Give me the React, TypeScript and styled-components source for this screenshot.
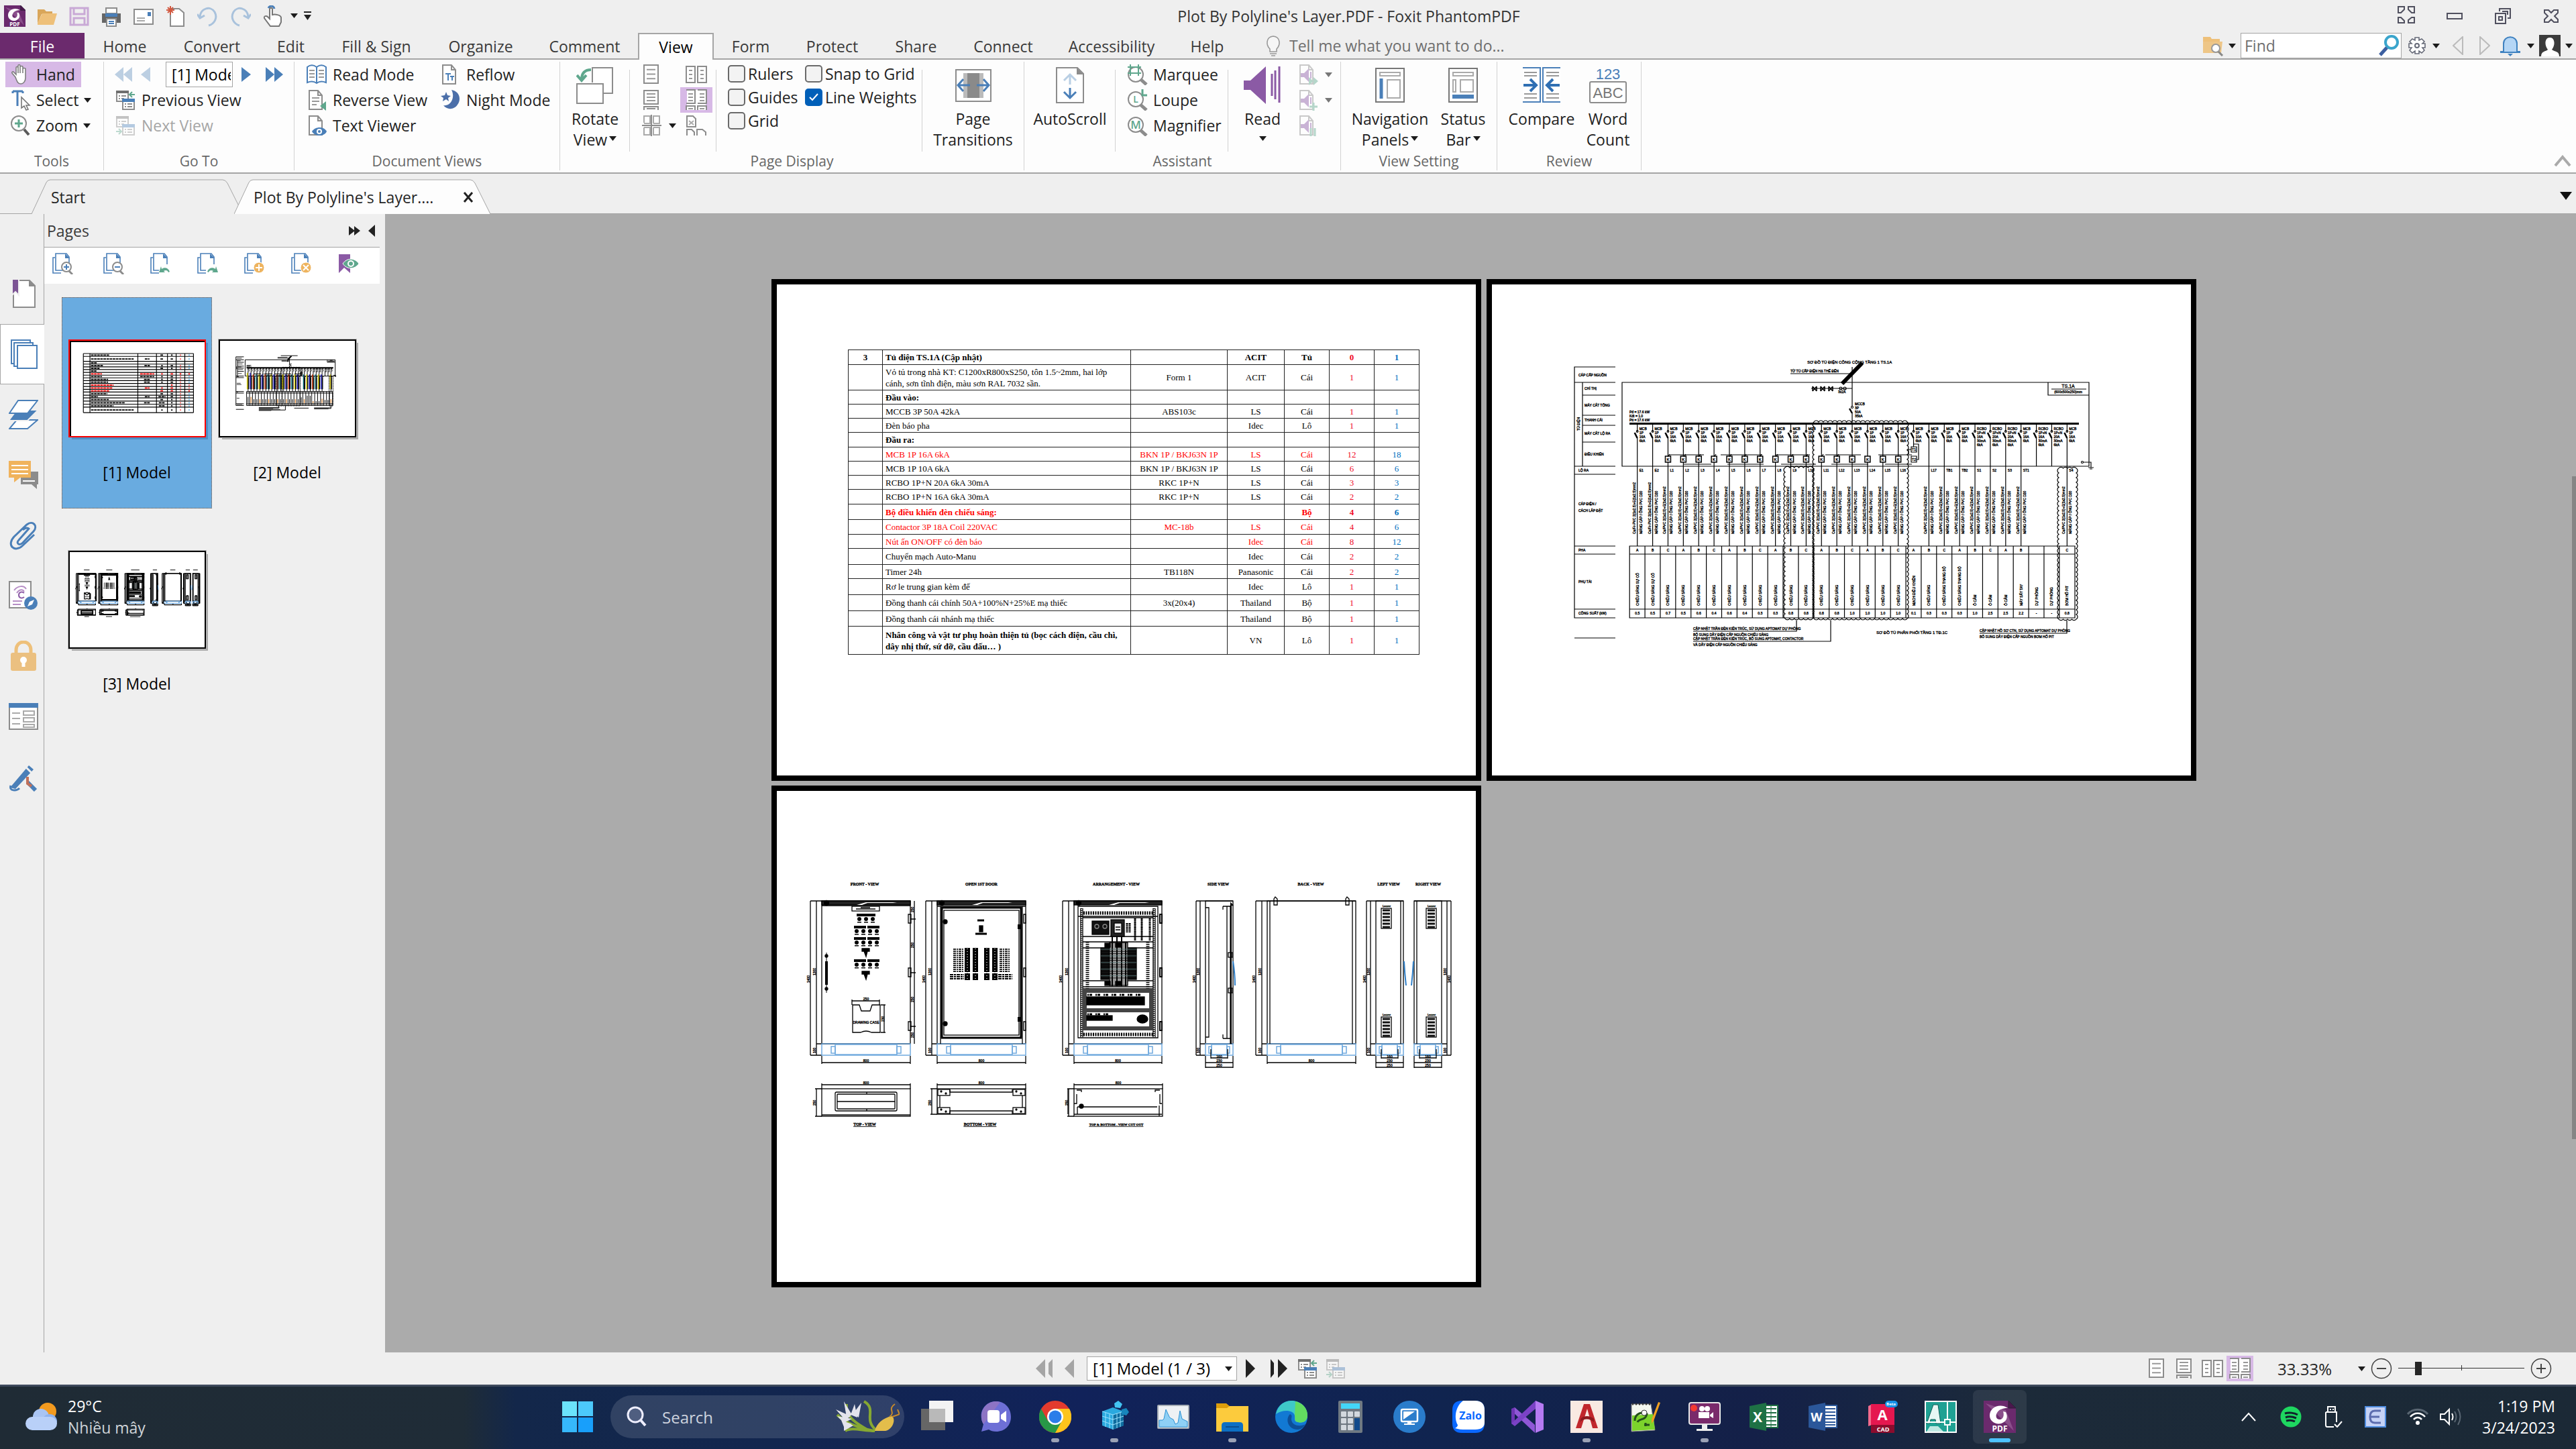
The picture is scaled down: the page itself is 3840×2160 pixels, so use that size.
import React from "react";
import styled, { createGlobalStyle, css } from "styled-components";

const Global = createGlobalStyle`
  *, *::before, *::after { box-sizing: border-box; }
  body { margin: 0; background: #efefef; }
  body, button, input, select { font-family: "Open Sans", "Noto Sans", sans-serif; font-size: 23px; }
  button { border: 0; padding: 0; background: transparent; color: inherit; }
  svg { display: block; flex: none; }
`;

const C = {
  blue: "#4a7fb8", green: "#5fa78d", gray: "#8c8c8c", dark: "#5a5a5a", purple: "#8b5aa5",
  orange: "#eec07a", line: "#a5a5a5", lilac: "#d7b9e6", fox: "#6b2a6d",
};

/* ---------- icons ---------- */
type IconProps = { w?: number; h?: number; box?: string; children: React.ReactNode };
const Ic = ({ w = 32, h = 32, box = "0 0 32 32", children }: IconProps) => (
  <svg width={w} height={h} viewBox={box} fill="none" strokeWidth="2" aria-hidden="true">{children}</svg>
);
const Caret = ({ color = "#1c1c1c", w = 11 }: { color?: string; w?: number }) => (
  <svg width={w} height="7" viewBox="0 0 11 7" aria-hidden="true"><path d="M0 0H11L5.5 7Z" fill={color} /></svg>
);
const FoxitLogo = ({ size = 32 }: { size?: number }) => (
  <svg width={size} height={size} viewBox="0 0 48 48" aria-hidden="true">
    <path d="M0 0H37L48 11V48H0Z" fill={C.fox} />
    <path d="M3 4L45 45L33 14Z" fill="#8a4f8b" />
    <path d="M37 0V11H48Z" fill="#4b174d" stroke="#2a2036" />
    <path d="M36 11C24 3 9 10 9 22C9 31 18 36 26 34C34 31 37 25 33 17L29 16C31 22 29 28 24 28C19 28 17 23 20 18C23 13 28 11 36 11Z" fill="#fff" />
    <text x="24" y="46" fontSize="12" fontWeight="700" fill="#fff" textAnchor="middle" fontFamily="Open Sans, sans-serif">PDF</text>
  </svg>
);
const PageLines = ({ x = 5, y = 2, w = 20, h = 27 }) => (
  <g><rect x={x} y={y} width={w} height={h} fill="#fff" stroke={C.gray} />
    {[0.25, 0.5, 0.75].map(k => <path key={k} d={`M${x + 4} ${y + h * k}H${x + w - 4}`} stroke="#999" />)}</g>
);
const SinglePage = () => <Ic><PageLines x={5} w={21} /></Ic>;
const FacingPages = () => <Ic><PageLines x={1} w={13} y={4} h={24} /><PageLines x={18} w={13} y={4} h={24} /></Ic>;
const ContPage = () => <Ic><PageLines x={5} w={21} h={20} /><path d="M5 31V26H26V31M9 29H22" stroke={C.gray} /></Ic>;
const ContFacing = () => (
  <Ic><rect x="2" y="1" width="28" height="30" fill="#fff" />
    {[[1, 14], [18, 31]].map(([a, b]) => <g key={a}><path d={`M${a} 1H${b}V21H${a}M${a} 31V25H${b}V31`} stroke={C.gray} />
      <path d={`M${a + 3} 7H${b - 3}M${a + 3} 12H${b - 3}M${a + 3} 17H${b - 3}M${a + 3} 29H${b - 3}`} stroke="#999" /></g>)}
  </Ic>
);
const Windows = ({ next = false }: { next?: boolean }) => (
  <Ic><g opacity={next ? 0.4 : 1}>
    <path d="M3 3H20V18H3Z" fill="#fff" stroke={C.gray} /><path d="M2 2H21V6H2Z" fill="#6f6f6f" />
    <path d="M6 10H8M10 10H17M6 14H8M10 14H14" stroke={C.gray} />
    <path d="M12 16H29V30H12Z" fill="#fff" stroke={C.gray} /><path d="M11 14H30V19H11Z" fill={C.blue} />
    <path d="M15 22H17M19 22H26M15 26H17M19 26H26" stroke={C.gray} />
    {next ? <path d="M2 25H10M6 21L10 25L6 29" stroke={C.green} /> : <path d="M30 8H22M26 4L22 8L26 12" stroke={C.green} />}
  </g></Ic>
);
const HandIcon = () => <Ic><path d="M9 20L4 14C3 12 6 11 7 13L10 16V6C10 4 13 4 13 6V3C13 1 16 1 16 3V5C16 3 20 3 20 5V8C20 6 24 6 24 8V21C24 26 21 30 17 30C12 30 11 25 9 20ZM13 6V14M16 5V14M20 8V14" fill="#fff" stroke="#7d7d7d" strokeWidth="1.6" /></Ic>;
const SelectIcon = () => <Ic><path d="M5 3H20M5 3V6M20 3V6M12 3V25" stroke={C.blue} strokeWidth="3" /><path d="M18 12V28L22 25L25 31L28 30L25 24H30Z" fill="#fff" stroke="#777" strokeWidth="1.6" /></Ic>;
const ZoomIcon = () => <Ic><circle cx="14" cy="13" r="11" fill="#fff" stroke={C.gray} /><path d="M22 22L29 30" stroke={C.dark} strokeWidth="4" /><path d="M14 7V19M8 13H20" stroke={C.green} strokeWidth="3" /></Ic>;
const BookIcon = () => <Ic><path d="M2 5C7 1 12 2 16 5C20 2 25 1 30 5V28C25 26 20 26 16 29C12 26 7 26 2 28ZM16 5V29" fill="#fff" stroke={C.blue} /><path d="M5 10H13M5 15H13M5 20H13M19 10H27M19 15H27M19 20H27" stroke="#999" /></Ic>;
const DocBase = () => <path d="M5 2H18L24 9V30H5ZM18 2V9H24" fill="#fff" stroke={C.gray} />;
const ReverseIcon = () => <Ic><DocBase /><path d="M9 13H20M9 18H20M9 23H16" stroke="#999" /><path d="M30 18V32L21 25Z" fill={C.green} /></Ic>;
const TextViewerIcon = () => <Ic><DocBase /><path d="M9 25C14 17 27 17 31 25C27 33 14 33 9 25Z" fill={C.blue} /><circle cx="20" cy="25" r="4" fill="#fff" /><circle cx="20" cy="25" r="2" fill={C.blue} /></Ic>;
const ReflowIcon = () => <Ic><DocBase /><path d="M9 15H17M13 15V25M16 19H22M19 19V25" stroke={C.blue} /></Ic>;
const MoonIcon = () => <Ic><path d="M18 1C30 3 33 15 27 23C22 31 11 31 6 24C17 26 24 12 18 1Z" fill="#4b6fa9" /><path d="M10 4L12 9L17 10L13 13L14 18L10 15L5 18L6 13L2 10L8 9Z" fill="#4b6fa9" /></Ic>;
const ArrowIcon = ({ dir, dbl, color }: { dir: "l" | "r"; dbl?: boolean; color: string }) => {
  const bw = dbl ? 26 : 14;
  const right = dbl ? "M0 0L13 11L0 22ZM13 0L26 11L13 22Z" : "M0 0L14 11L0 22Z";
  const left = dbl ? "M26 0L13 11L26 22ZM13 0L0 11L13 22Z" : "M14 0L0 11L14 22Z";
  return <svg width={bw} height="22" viewBox={`0 0 ${bw} 22`} aria-hidden="true"><path d={dir === "l" ? left : right} fill={color} /></svg>;
};
const RotateIcon = () => <Ic w={56} h={56} box="0 0 56 56"><path d="M24 24V2H54V40H41" fill="#fff" stroke={C.gray} /><rect x="1" y="26" width="39" height="29" fill="#fff" stroke={C.gray} /><path d="M22 5C12 5 8 11 8 20M1 13L8 21L15 13" stroke={C.green} strokeWidth="4" /></Ic>;
const SplitIcon = () => <Ic><path d="M5 12V2H14V13H5M19 13V2H28V13H19M5 19V30H14V19H5M19 19V30H28V19H19" fill="#fff" stroke="#aaa" /><path d="M16 0V32M2 16H31" stroke={C.gray} /></Ic>;
const CoverIcon = () => <Ic><path d="M2 2H11L15 6V18H2ZM2 31V22H9L13 26V31M17 31V22H25L30 26V31" fill="#fff" stroke={C.gray} /><path d="M5 9L12 15M12 9L5 15" stroke="#aaa" /></Ic>;
const TransIcon = () => <Ic w={54} h={54} box="0 0 54 54"><rect x="1" y="4" width="52" height="47" fill="#fff" stroke={C.gray} /><path d="M12 9H42V46H12Z" fill="#bbb" /><path d="M18 9H36V46H18Z" fill="#8a8a8a" /><path d="M4 27H22M12 18L4 27L12 36M50 27H32M42 18L50 27L42 36" stroke={C.blue} strokeWidth="3" /></Ic>;
const ScrollIcon = () => <Ic w={42} h={54} box="0 0 42 54"><path d="M1 1H32L41 10V53H1Z" fill="#fff" stroke={C.gray} /><path d="M31 1V11H41Z" fill={C.gray} /><path d="M21 26V12M12 20L21 11L30 20" stroke="#b9cfe4" strokeWidth="3" /><path d="M21 31V45M12 37L21 46L30 37" stroke={C.blue} strokeWidth="3" /></Ic>;
const MagIcon = ({ k }: { k: string }) => (
  <Ic><circle cx="14" cy={k === "#" ? 16 : 15} r="11" fill="#fff" stroke={C.gray} /><path d="M21 23L30 31" stroke={C.gray} strokeWidth="5" />
    {k === "#" ? <path d="M6 1V18M18 1V18M2 5H22M2 14H22" stroke={C.green} /> : <text x="14" y={k === "M" ? 21 : 20} textAnchor="middle" fontSize={k === "M" ? 17 : 14} fill={C.green} fontWeight="600">{k}</text>}
    {k === "L" && <path d="M24 0V9H31" stroke={C.green} strokeWidth="3" />}
  </Ic>
);
const ReadIcon = () => <Ic w={56} h={58} box="0 0 56 58"><path d="M0 22H10L33 1V57L10 36H0Z" fill={C.purple} /><path d="M42 12V45M47 7V50M53 1V55" stroke={C.purple} strokeWidth="3" /></Ic>;
const ReadDoc = ({ k }: { k: number }) => (
  <Ic><g opacity=".45"><DocBase /><path d="M6 14H11L18 7V27L11 20H6Z" fill={C.purple} /><path d="M21 12V22" stroke={C.purple} />
    {k === 0 && <path d="M18 20L25 26L18 32ZM25 20L32 26L25 32Z" fill={C.green} />}
    {k === 1 && <path d="M25 20V32M19 26H31" stroke={C.green} strokeWidth="3" />}
    {k === 2 && <path d="M21 20V32M27 20V32" stroke={C.green} strokeWidth="3" />}</g></Ic>
);
const NavPanelIcon = () => <Ic w={44} h={52} box="0 0 44 52"><rect x="1" y="1" width="42" height="50" fill="#fff" stroke="#777" /><rect x="7" y="7" width="30" height="5" stroke="#aaa" /><path d="M9 16V46" stroke={C.blue} strokeWidth="5" /><rect x="18" y="18" width="19" height="27" stroke="#aaa" /></Ic>;
const StatusIcon = () => <Ic w={44} h={52} box="0 0 44 52"><rect x="1" y="1" width="42" height="50" fill="#fff" stroke="#777" /><rect x="7" y="7" width="30" height="5" stroke="#aaa" /><rect x="7" y="18" width="4" height="18" stroke="#aaa" /><rect x="18" y="18" width="19" height="18" stroke="#aaa" /><path d="M6 43H38" stroke={C.blue} strokeWidth="6" /></Ic>;
const CompareIcon = () => <Ic w={58} h={54} box="0 0 58 54"><path d="M1 1H27V52H1M57 1H31V52H57" fill="#fff" stroke={C.blue} /><path d="M3 8H22M3 13H22M3 40H22M3 46H22M36 8H55M36 13H55M36 40H55M36 46H55" stroke="#999" /><path d="M2 27H20M12 18L21 27L12 36M56 27H38M46 18L37 27L46 36" stroke="#2f6fb3" strokeWidth="4" /></Ic>;
const CountIcon = () => <Ic w={56} h={54} box="0 0 56 54"><text x="28" y="18" fontSize="22" textAnchor="middle" fill={C.blue} fontFamily="Liberation Sans, sans-serif">123</text><rect x="1" y="22" width="54" height="31" rx="2" fill="#fff" stroke={C.gray} /><text x="28" y="46" fontSize="22" textAnchor="middle" fill="#777" fontFamily="Liberation Sans, sans-serif">ABC</text></Ic>;

const quick: [string, React.ReactNode][] = [
  ["Open", <Ic><path d="M2 6H12L15 9H24V13H8L2 27Z" fill="#d9a65a" /><path d="M9 12H31L26 29H2V26Z" fill={C.orange} /></Ic>],
  ["Save", <Ic><path d="M3 4H29V29H3Z" stroke="#c9a9d6" strokeWidth="3" /><path d="M8 4V13H24V4M8 29V19H24V29" stroke="#c9a9d6" strokeWidth="3" /></Ic>],
  ["Print", <Ic><path d="M8 4H24V12H8Z" fill="#fff" stroke={C.gray} /><path d="M2 12H30V26H2Z" fill="#666" /><path d="M7 12H25V17H7Z" fill={C.blue} /><path d="M9 20H23V31H9Z" fill="#fff" stroke={C.gray} /><path d="M12 24H20M12 27H20" stroke={C.blue} /></Ic>],
  ["Email", <Ic><rect x="2" y="6" width="28" height="22" fill="#fff" stroke={C.gray} /><path d="M22 10H27V16H22Z" fill={C.blue} /><path d="M6 19H18M6 23H18" stroke="#aaa" /></Ic>],
  ["New", <Ic><path d="M8 5H21L28 11V31H8Z" fill="#fff" stroke={C.gray} /><path d="M8 1V14M2 7H14M4 3L12 11M12 3L4 11" stroke="#d2583f" /></Ic>],
  ["Undo", <Ic><path d="M4 17C5 4 20 0 26 10C31 19 25 28 17 30M0 13L4 19L11 15" stroke="#a9c2dc" strokeWidth="3" /></Ic>],
  ["Redo", <Ic><path d="M28 17C27 4 12 0 6 10C1 19 7 28 15 30M32 13L28 19L21 15" stroke="#a9c2dc" strokeWidth="3" /></Ic>],
  ["Touch mode", <Ic><path d="M10 4C12 0 18 0 19 5" stroke={C.blue} strokeWidth="3" /><path d="M12 20V6C12 3 16 3 16 6V14C20 13 28 14 29 18V25L26 31H13L4 19C3 16 7 15 9 17Z" fill="#fff" stroke="#777" /></Ic>],
];

/* ---------- window header ---------- */
const Shell = styled.div`display: flex; flex-direction: column; min-height: 100vh; background: #efefef; color: #262626;`;
const TitleBar = styled.header`display: flex; align-items: center; justify-content: space-between; height: 49px; padding: 0 21px 2px 6px; color: #333;`;
const QuickBar = styled.div`display: flex; align-items: center; gap: 16px; flex: 1;`;
const IconButton = styled.button<{ $w?: number; $on?: boolean }>`
  display: inline-flex; align-items: center; justify-content: center; flex: none;
  width: ${p => p.$w || 32}px; height: 38px; background: ${p => (p.$on ? C.lilac : "transparent")};
`;
const CaretPair = styled.div`display: flex; margin-left: -8px;`;
const Title = styled.h1`margin: 0; padding-left: 196px; font-size: 23px; line-height: 32px; font-weight: 400; white-space: nowrap;`;
const WindowButtons = styled.div`display: flex; gap: 40px; flex: 1; justify-content: flex-end;`;
const MenuBar = styled.nav`display: flex; align-items: stretch; height: 40px; border-bottom: 2px solid ${C.line};`;
const MenuTab = styled.button<{ $w: number; $kind?: "file" | "on" }>`
  width: ${p => p.$w}px; flex: none; color: #3a3a3a; padding-top: 2px; line-height: 36px; white-space: nowrap;
  ${p => p.$kind === "file" && css`background: ${C.fox}; color: #fff;`}
  ${p => p.$kind === "on" && css`background: #fdfdfd; color: #000; border: 2px solid ${C.line}; border-bottom: 0; margin-bottom: -2px; position: relative; padding-top: 0;`}
`;
const Tell = styled.label`display: flex; align-items: center; gap: 8px; margin-left: 30px; flex: 1;`;
const PlainInput = styled.input`
  border: 0; outline: 0; padding: 0; background: transparent; min-width: 0; width: 100%; color: #262626;
  &::placeholder { color: #6f6f6f; opacity: 1; }
`;
const MenuRight = styled.div`display: flex; align-items: center; padding-right: 5px; gap: 7px;`;
const FindBox = styled.label`display: flex; align-items: center; width: 240px; height: 38px; border: 1px solid ${C.line}; background: #fff; padding: 0 2px 0 5px;`;

/* ---------- ribbon ---------- */
const Ribbon = styled.section`display: flex; align-items: flex-start; height: 170px; padding-top: 3px; background: #fdfdfd; border-bottom: 2px solid ${C.line};`;
const Group = styled.div<{ $w: number }>`
  width: ${p => p.$w}px; height: 162px; flex: none; border-right: 1px solid #d2d2d2; display: flex; flex-direction: column; justify-content: space-between;
`;
const GroupBody = styled.div`display: flex;`;
const GroupLabel = styled.div`text-align: center; font-size: 21px; line-height: 28px; color: #666;`;
const Seg = styled.div<{ $w?: number; $line?: boolean; $pad?: number }>`
  display: flex; width: ${p => (p.$w ? p.$w + "px" : "auto")}; flex: none; height: 134px; padding-left: ${p => p.$pad || 0}px;
  ${p => p.$line && css`background: linear-gradient(#d2d2d2, #d2d2d2) right 12px / 1px 122px no-repeat;`}
`;
const Col = styled.div<{ $w?: number; $pad?: number }>`
  display: flex; flex-direction: column; align-items: flex-start; padding-left: ${p => p.$pad || 0}px; width: ${p => (p.$w ? p.$w + "px" : "auto")};
`;
const Row = styled.button<{ $on?: boolean; $off?: boolean }>`
  display: flex; align-items: center; gap: 8px; height: 38px; padding: 0 9px 0 6px; white-space: nowrap;
  background: ${p => (p.$on ? C.lilac : "transparent")}; color: ${p => (p.$off ? "#a6a6a6" : "#222")};
`;
const Big = styled.button<{ $w: number }>`display: flex; flex-direction: column; align-items: center; width: ${p => p.$w}px; line-height: 31px; white-space: nowrap; color: #222;`;
const BigIcon = styled.span`display: flex; align-items: center; height: 70px;`;
const BigLine = styled.span`display: flex; align-items: flex-start; gap: 3px; & svg { margin-top: 10px; }`;
const SplitButton = styled(IconButton)`gap: 10px;`;
const PageNav = styled.div`display: flex; align-items: center; height: 38px;`;
const GotoInput = styled.input`width: 100px; height: 38px; border: 1px solid ${C.line}; background: #fff; padding: 0 2px 0 8px; color: #000; margin: 0 13px 0 15px; outline: 0;`;
const Check = styled.label`
  display: flex; align-items: center; gap: 4px; height: 35px; white-space: nowrap; color: #222;
  input { appearance: none; margin: 0; width: 26px; height: 26px; border: 2px solid #6a6a6a; border-radius: 5px; background: #f3f3f3; }
  input:checked { border-color: #005fb8; background: #005fb8 url("data:image/svg+xml,%3Csvg xmlns='http://www.w3.org/2000/svg' viewBox='0 0 22 22'%3E%3Cpath d='M5 11l4 4 8-9' fill='none' stroke='white' stroke-width='2'/%3E%3C/svg%3E"); }
`;
const CornerSlot = styled.div<{ $tabs?: boolean }>`flex: 1; align-self: stretch; display: flex; align-items: flex-end; justify-content: flex-end; padding: ${p => (p.$tabs ? "0 0 20px" : "0 7px 8px 0")};`;

/* ---------- document tabs ---------- */
const DocTabs = styled.div`display: flex; height: 60px; padding: 7px 6px 0 47px; align-items: flex-end; border-bottom: 1px solid ${C.line};`;
const DocTab = styled.div<{ $w: number; $on?: boolean }>`
  position: relative; width: ${p => p.$w}px; height: 52px; margin-right: -14px; padding: 2px 26px 0 29px; z-index: ${p => (p.$on ? 1 : 0)};
  display: flex; align-items: center; justify-content: space-between; margin-bottom: -1px;
  & > svg { position: absolute; inset: 0; z-index: -1; }
  & > button { white-space: nowrap; }
`;
const TabShape = ({ w, fill }: { w: number; fill: string }) => (
  <svg width={w} height="52" viewBox={`0 0 ${w} 52`} aria-hidden="true"><path d={`M0 52L22 5Q24 1 28 1H${w - 31}Q${w - 27} 1 ${w - 24} 6L${w - 1} 52`} fill={fill} stroke={C.line} /></svg>
);

/* ---------- left side ---------- */
const Work = styled.main`display: flex; flex: 1; min-height: 0;`;
const Rail = styled.nav`width: 66px; flex: none; padding-top: 74px; border-right: 1px solid ${C.line};`;
const RailButton = styled.button<{ $on?: boolean }>`
  width: 66px; height: 90px; display: flex; align-items: center; justify-content: center; padding-left: 4px;
  ${p => p.$on && css`background: #fff; border: 1px solid ${C.line}; border-right: 0;`}
`;
const Panel = styled.aside`width: 508px; flex: none;`;
const PanelHead = styled.div`display: flex; align-items: center; height: 49px; padding: 0 14px 0 4px; gap: 11px; color: #3a3a3a;`;
const PanelTitle = styled.h2`margin: 0; flex: 1; font-size: 23px; font-weight: 400; line-height: 32px;`;
const PanelTools = styled.div`display: flex; align-items: center; gap: 38px; margin-right: 8px; height: 55px; padding: 0 0 6px 11px; background: #fff; border-top: 1px solid ${C.line}; & > :first-child { margin-right: 6px; }`;
const Thumbs = styled.div`display: grid; grid-template-columns: 224px 224px; padding: 20px 26px;`;
const ThumbCell = styled.figure<{ $on?: boolean }>`
  margin: 0; height: 315px; display: flex; flex-direction: column; align-items: center; padding-top: 62px; color: #000;
  background: ${p => (p.$on ? "#69abe0" : "transparent")}; border: 1px dotted ${p => (p.$on ? "#8a5a3a" : "transparent")};
  figcaption { margin-top: 36px; line-height: 32px; }
`;
const ThumbFrame = styled.div<{ $on?: boolean }>`
  width: 205px; height: 146px; background: #fff; border: 2px solid ${p => (p.$on ? "#f00" : "#000")};
  box-shadow: ${p => (p.$on ? "inset 1px 1px 0 1px #000, 4px 4px 0 -1px #4d8fc4" : "0 0 0 1px #bbb, 4px 4px 0 -1px #aaa")};
  svg { width: 100%; height: 100%; }
`;
const railIcons: [string, React.ReactNode][] = [
  ["Bookmarks", <Ic w={38} h={46} box="0 0 38 46"><path d="M4 3H28L36 11V43H4Z" fill="#fff" stroke={C.gray} /><path d="M27 2V12H37Z" fill={C.gray} /><path d="M2 1H12V25L7 20L2 25Z" fill="#7c5494" stroke="#efefef" /></Ic>],
  ["Pages", <Ic w={40} h={44} box="0 0 40 44"><path d="M5 36H1V1H29V4M9 40H5V5H33V8" stroke={C.blue} /><rect x="10" y="9" width="29" height="34" fill="#fff" stroke={C.blue} /></Ic>],
  ["Layers", <Ic w={44} h={44} box="0 0 44 44"><path d="M12 30H43L28 43H1Z" fill="#fff" stroke={C.blue} /><path d="M12 15H44L28 31H0Z" fill={C.blue} stroke="#efefef" /><path d="M14 1H43L28 20H1Z" fill="#fff" stroke={C.blue} /></Ic>],
  ["Comments", <Ic w={44} h={44} box="0 0 44 44"><path d="M18 17H44V36H42V43L34 36H18Z" fill={C.gray} /><path d="M0 1H33V26H17L8 33V26H0Z" fill="#f0b35c" /><path d="M4 8H29M4 14H29M4 20H29M21 31H39" stroke="#fff" /></Ic>],
  ["Attachments", <Ic w={42} h={44} box="0 0 42 44"><path d="M29 12L14 29C9 34 15 38 20 33L36 16C43 8 35 -1 26 6L7 24C-5 37 8 48 19 38L37 21M30 13C26 9 22 12 20 14" stroke={C.blue} strokeWidth="3" /></Ic>],
  ["Signatures", <Ic w={44} h={44} box="0 0 44 44"><path d="M1 1H33V40H1Z" fill="#fff" stroke={C.gray} /><path d="M8 14C14 6 23 7 26 12M12 18C16 12 21 12 23 16M6 30H20M6 35H18" stroke="#b78fc6" /><path d="M23 18C19 15 15 17 15 21C15 25 19 27 23 24" stroke={C.purple} /><circle cx="33" cy="33" r="10" fill={C.blue} /><path d="M28 38L31 31L38 28L35 35Z" fill="#fff" /></Ic>],
  ["Security", <Ic w={38} h={46} box="0 0 38 46"><path d="M8 20V14C8 -2 30 -2 30 14V20" stroke={C.orange} strokeWidth="5" /><rect x="0" y="18" width="38" height="27" rx="3" fill="#ebc080" /><circle cx="19" cy="29" r="5" fill="#fff" /><path d="M19 30V39" stroke="#fff" strokeWidth="5" /></Ic>],
  ["Fields", <Ic w={44} h={40} box="0 0 44 40"><rect x="1" y="1" width="42" height="38" fill="#fff" stroke={C.gray} /><path d="M0 0H44V7H0Z" fill={C.blue} /><path d="M5 15H17M5 23H17M5 31H17" stroke="#aaa" /><path d="M22 12H38V18H22ZM22 22H38V28H22ZM22 32H38V36H22Z" stroke="#aaa" /></Ic>],
  ["Tools", <Ic w={44} h={44} box="0 0 44 44"><path d="M2 38L30 5L37 11L10 40Z" fill={C.blue} /><path d="M24 6L34 16" stroke="#efefef" strokeWidth="3" /><path d="M3 35C0 44 12 43 16 39" stroke={C.blue} strokeWidth="3" /><path d="M28 30L40 42" stroke={C.blue} strokeWidth="6" /><path d="M28 22V32L34 36" stroke="#c0705a" strokeWidth="4" /></Ic>],
];
const PageTool = ({ k }: { k: number }) => (
  <Ic>{k === 6 ? <g><path d="M2 2H19V30L10 22L2 30Z" fill={C.purple} /><path d="M8 16C14 7 26 7 32 16C26 25 14 25 8 16Z" fill={C.green} stroke="#fff" strokeWidth="1" /><circle cx="20" cy="16" r="5" fill="#fff" /><circle cx="20" cy="16" r="3" fill={C.green} /></g> : <g>
    <path d="M5 7H2V30H14M6 1H22L26 6V26H6Z" fill="#fff" stroke={C.blue} strokeWidth="1.6" /><path d="M20 1V8H27Z" fill={C.blue} />
    {k < 2 && <g><path d="M25 26L31 32" stroke={C.gray} strokeWidth="3" /><circle cx="22" cy="21" r="7" fill="#fff" stroke={C.gray} /><path d={k ? "M18 21H26" : "M18 21H26M22 17V25"} stroke={C.blue} /></g>}
    {(k === 2 || k === 3) && <path d="M14 17H32V31H14Z" fill="#fff" />}
    {k === 2 && <path d="M30 28C28 22 22 21 18 24L17 20L14 29L23 29L21 27C24 25 27 26 28 29Z" fill={C.green} />}
    {k === 3 && <path d="M16 28C18 22 24 21 28 24L29 20L32 29L23 29L25 27C22 25 19 26 18 29Z" fill={C.green} />}
    {k > 3 && <g><circle cx="23" cy="22" r="8" fill="#eeb45f" stroke="#fff" strokeWidth="1" /><path d={k === 4 ? "M23 17V27M18 22H28" : "M19 18L27 26M27 18L19 26"} stroke="#fff" /></g>}
  </g>}</Ic>
);

/* ---------- canvas ---------- */
const Canvas = styled.section`flex: 1; background: #ababab; padding: 97px 0 40px 10px; display: flex; justify-content: center; align-items: flex-start; border-right: 6px solid #ababab; border-image: linear-gradient(#ababab 392px, #858585 392px, #858585 1378px, #ababab 1378px) 1;`;
const Sheets = styled.div`display: grid; grid-template-columns: 1058px 1058px; gap: 7px 8px; margin-right: -6px;`;
const Sheet = styled.article`height: 748px; background: #fff; border: 8px solid #000; svg { width: 100%; height: 100%; }`;
const Quote = styled.table`
  margin: 97px 0 0 106px; width: 851px; border-collapse: collapse; table-layout: fixed; color: #000;
  font: 13px/17px "Liberation Serif", "Times New Roman", serif;
  td { border: 1px solid #222; padding: 0; text-align: center; overflow: hidden; }
  td:nth-child(2) { text-align: left; padding: 0 16px 0 4px; }
  td:nth-child(6) { color: #f00a28; } td:nth-child(7) { color: #0070c0; }
`;
const QuoteRow = styled.tr<{ $h: number; $b?: boolean; $name?: boolean; $red?: boolean }>`
  height: ${p => p.$h}px; font-weight: ${p => (p.$b ? 700 : 400)}; color: ${p => (p.$red ? "#f00" : "#000")};
  ${p => p.$name && css`td:nth-child(2) { font-weight: 700; }`}
`;
type Q = [number, string, string, string, string, string, string, string];
const quote: Q[] = [
  [22, "b", "Tủ điện TS.1A (Cập nhật)", "", "ACIT", "Tủ", "0", "1"],
  [38, "", "Vỏ tủ trong nhà KT: C1200xR800xS250, tôn 1.5~2mm, hai lớp cánh, sơn tĩnh điện, màu sơn RAL 7032 sần.", "Form 1", "ACIT", "Cái", "1", "1"],
  [21, "b", "Đầu vào:", "", "", "", "", ""],
  [21, "", "MCCB 3P 50A 42kA", "ABS103c", "LS", "Cái", "1", "1"],
  [21, "", "Đèn báo pha", "", "Idec", "Lô", "1", "1"],
  [22, "b", "Đầu ra:", "", "", "", "", ""],
  [21, "r", "MCB 1P 16A 6kA", "BKN 1P / BKJ63N 1P", "LS", "Cái", "12", "18"],
  [21, "", "MCB 1P 10A 6kA", "BKN 1P / BKJ63N 1P", "LS", "Cái", "6", "6"],
  [21, "", "RCBO 1P+N 20A 6kA 30mA", "RKC 1P+N", "LS", "Cái", "3", "3"],
  [22, "", "RCBO 1P+N 16A 6kA 30mA", "RKC 1P+N", "LS", "Cái", "2", "2"],
  [23, "br", "Bộ điều khiển đèn chiếu sáng:", "", "", "Bộ", "4", "6"],
  [22, "r", "Contactor 3P 18A Coil 220VAC", "MC-18b", "LS", "Cái", "4", "6"],
  [21, "r", "Nút ấn ON/OFF có đèn báo", "", "Idec", "Cái", "8", "12"],
  [24, "", "Chuyển mạch Auto-Manu", "", "Idec", "Cái", "2", "2"],
  [21, "", "Timer 24h", "TB118N", "Panasonic", "Cái", "2", "2"],
  [24, "", "Rơ le trung gian kèm đế", "", "Idec", "Lô", "1", "1"],
  [24, "", "Đồng thanh cái chính 50A+100%N+25%E mạ thiếc", "3x(20x4)", "Thailand", "Bộ", "1", "1"],
  [23, "", "Đồng thanh cái nhánh mạ thiếc", "", "Thailand", "Bộ", "1", "1"],
  [42, "n", "Nhân công và vật tư phụ hoàn thiện tủ (bọc cách điện, cầu chì, dây nhị thứ, sứ đỡ, cầu đấu… )", "", "VN", "Lô", "1", "1"],
];
const colWidths = [51, 370, 144, 85, 67, 67, 67];
const QuoteTable = () => (
  <Quote>
    <colgroup>{colWidths.map((w, i) => <col key={i} style={{ width: w }} />)}</colgroup>
    <tbody>{quote.map((r, i) => (
      <QuoteRow key={i} $h={r[0]} $b={r[1].includes("b")} $name={r[1] === "n"} $red={r[1].includes("r")}>
        <td>{i === 0 ? "3" : ""}</td>{r.slice(2).map((c, j) => <td key={j}>{c}</td>)}
      </QuoteRow>
    ))}</tbody>
  </Quote>
);
const QuoteMini = () => {
  const ys = quote.reduce<number[]>((a, r) => [...a, a[a.length - 1] + r[0]], [98]);
  const xs = colWidths.reduce<number[]>((a, w) => [...a, a[a.length - 1] + w], [105]);
  return (
    <svg viewBox="0 0 1042 732" preserveAspectRatio="none" fill="none" stroke="#000" strokeWidth="6" aria-hidden="true">
      {ys.map(y => <path key={y} d={`M105 ${y}H956`} />)}{xs.map(x => <path key={x} d={`M${x} 98V552`} />)}
      {quote.map((r, i) => r.slice(2).map((c, j) => {
        const s = String(c); const len = Math.min(s.length * 6, 330); if (!len) return null;
        const mid = (xs[j + 1] + xs[j + 2]) / 2; const a = j === 0 ? xs[1] + 8 : mid - len / 2;
        return <path key={i + "-" + j} strokeWidth="9" strokeDasharray="20 4" d={`M${a} ${(ys[i] + ys[i + 1]) / 2 + 1}h${len}`} stroke={j === 4 || r[1].includes("r") ? "#f00" : j === 5 ? "#0a8ad8" : "#000"} />;
      }))}
    </svg>
  );
};

/* ---------- drawings ---------- */
type TProps = { x: number; y: number; s?: number; a?: "start" | "middle"; r?: boolean; mini?: boolean; children: string; color?: string; serif?: boolean; u?: boolean };
const T = ({ x, y, s = 5, a = "start", r, mini, children, color = "#000", serif, u }: TProps) => {
  if (mini) {
    const w = children.length * s * 0.6; const x0 = a === "middle" ? x - w / 2 : x;
    return r ? <rect x={x - s} y={y - w} width={s} height={w} fill={color} stroke="none" /> : <rect x={x0} y={y - s} width={w} height={s * 0.8} fill={color} stroke="none" />;
  }
  return <text x={x} y={y} fontSize={s} textAnchor={a} fill={color} stroke={color} strokeWidth="0.35" fontWeight={serif ? 700 : 400} textDecoration={u ? "underline" : undefined}
    fontFamily={serif ? "Liberation Serif, serif" : "Liberation Sans, sans-serif"} transform={r ? `rotate(-90 ${x} ${y})` : undefined}>{children}</text>;
};
const cloud = (x0: number, y0: number, x1: number, y1: number) => {
  const nx = Math.max(2, Math.round((x1 - x0) / 7)), ny = Math.round((y1 - y0) / 7);
  const dx = (x1 - x0) / nx, dy = (y1 - y0) / ny;
  return `M${x0} ${y0}` + `a4 4 0 0 1 ${dx} 0`.repeat(nx) + `a4 4 0 0 1 0 ${dy}`.repeat(ny) + `a4 4 0 0 1 ${-dx} 0`.repeat(nx) + `a4 4 0 0 1 0 ${-dy}`.repeat(ny);
};
const kw = "0.5 0.5 0.7 0.5 0.6 0.4 0.6 0.4 0.3 0.3 0.8 0.8 0.8 0.8 1.0 1.0 1.0 1.0 0.1 0.3 0.3 0.3 1.0 2.5 2.5 2.2 - - 0.8".split(" ");
const codes = ["E1", "E2", ...Array.from({ length: 16 }, (_, i) => "L" + (i + 1)), "", "L17", "TB1", "TB2", "S1", "S2", "S3", "ST1", "", "", "S4"];
const loads = ["CHIẾU SÁNG SỰ CỐ", "CHIẾU SÁNG SỰ CỐ", ...Array(16).fill("CHIẾU SÁNG"), "MẠCH ĐIỀU KHIỂN", "CHIẾU SÁNG", "CHIẾU SÁNG THANG BỘ", "CHIẾU SÁNG THANG BỘ", "Ổ CẮM", "Ổ CẮM", "Ổ CẮM", "MÁY SẤY TAY", "DỰ PHÒNG", "DỰ PHÒNG", "BƠM HỐ PIT"];
const Schematic = ({ mini }: { mini?: boolean }) => {
  const P = 22.88, X0 = 120.7, L = 109.2, R = 773;
  const sw = mini ? 5 : 1.2;
  return (
    <svg viewBox="-96 -86 1042 732" preserveAspectRatio={mini ? "none" : undefined} fill="none" stroke="#000" strokeWidth={sw} aria-label="Single line diagram" role="img">
      <path d="M88 37H27V411H88M27 60H88M27 185H88M27 197H88M27 304H88M27 316H88M27 398H88M27 441H88M39 60V185M39 79H88M39 109H88M39 124H88M39 149H88" />
      {([["CÁP CẤP NGUỒN", 33, 51], ["CHỈ THỊ", 42, 71], ["MÁY CẮT TỔNG", 42, 96], ["THANH CÁI", 42, 118], ["MÁY CẮT LỘ RA", 42, 138], ["ĐIỀU KHIỂN", 42, 169], ["LỘ RA", 33, 193], ["CÁP ĐIỆN /", 33, 243], ["CÁCH LẮP ĐẶT", 33, 253], ["PHA", 33, 312], ["PHỤ TẢI", 33, 359], ["CÔNG SUẤT (kW)", 33, 406]] as [string, number, number][]).map(([t, x, y]) => <T key={t} x={x} y={y} mini={mini}>{t}</T>)}
      <T x={35} y={132} r mini={mini}>TỦ ĐIỆN</T>
      <path d="M98 60H794V185H98ZM733 60V79H794M738 70H790" />
      <T x={763} y={68} s={7} a="middle" mini={mini}>TS.1A</T><T x={763} y={76} a="middle" mini={mini}>(600x500x250)mm</T>
      <T x={374} y={32} s={6} mini={mini}>SƠ ĐỒ TỦ ĐIỆN CÔNG CỘNG TẦNG 1 TS.1A</T>
      <T x={349} y={45} s={5} mini={mini}>TỪ TỦ CẤP ĐIỆN HẠ THẾ ĐẾN</T>
      <path d="M349 47H440M441 37V96M441 106V121M380 69H441" /><path d="M456 31L426 62" strokeWidth={mini ? 10 : 6} />
      {[385, 397, 409].map(x => <path key={x} strokeWidth="1.5" d={`M${x - 3} 66L${x + 3} 73M${x + 3} 66L${x - 3} 73M${x - 3} 66V73M${x + 3} 66V73`} />)}
      <circle cx="424" cy="69" r="2" /><circle cx="430" cy="69" r="2" /><T x={420} y={76} s={5} mini={mini}>3x2A</T>
      <circle cx="441" cy="97" r="1.5" /><path d="M437 99L441 106" strokeWidth="2.5" />
      {["MCCB", "3P", "50A", "35kA"].map((t, i) => <T key={t} x={445} y={94 + i * 6} mini={mini}>{t}</T>)}
      {["Pđ = 17.6 kW", "Kđt = 1.0", "Ptt = 17.6 kW"].map((t, i) => <T key={t} x={109} y={106 + i * 6} mini={mini}>{t}</T>)}
      <path d="M109 121.5H779" strokeWidth={mini ? 10 : 3} />
      <path d={`M${L} 304H${R}V411H${L}ZM${L} 316H${R}M${L} 398H${R}`} />
      {kw.map((k, i) => {
        const x = X0 + i * P, spare = i === 26 || i === 27, rc = [22, 23, 24, 26, 27].includes(i);
        const end = i === 18 ? 156 : spare ? 185 : 304;
        const amp = [9, 10, 18, 19].includes(i) ? "10A" : [23, 24, 27].includes(i) ? "20A" : "16A";
        const ks = i > 1 && i < 18;
        return (
          <g key={i}>
            <path d={ks ? `M${x} 122V133M${x} 143V170M${x} 179V${end}` : `M${x} 122V133M${x} 143V${end}`} />
            <circle cx={x} cy="133" r="1.3" /><path d={`M${x - 4} 135L${x} 143`} strokeWidth="2.5" />
            {(rc ? ["RCBO", "1P+N", amp, "30mA", "6kA"] : ["MCB", "1P", amp, "6kA"]).map((t, j) => <T key={j} x={x + 3} y={131 + j * 6} mini={mini}>{t}</T>)}
            {ks && <g><rect x={x - 4} y="170" width="8" height="9" strokeWidth="1.5" /><T x={x} y={177} s={6} a="middle" mini={mini}>K</T></g>}
            {codes[i] && <T x={x + 3} y={193} mini={mini}>{codes[i]}</T>}
            {codes[i] && <g>
              <T x={x - 3} y={286} s={mini ? 7 : 5} r mini={mini} color={mini ? ["#e8d800", "#00a", "#c30", "#067"][i % 4] : "#000"}>{i < 2 ? "Cu/Fr-PVC 2(1x2.5)+E(1x2.5)mm2" : "Cu/PVC 2(1x2.5)+E(1x2.5)mm2"}</T>
              <T x={x + 7} y={286} s={mini ? 7 : 5} r mini={mini}>MÁNG CÁP / ỐNG PVC D20</T>
            </g>}
            {i > 0 && <path d={`M${L + i * P} 304V411`} />}
            {!spare && <T x={x} y={312} a="middle" mini={mini}>{i === 28 ? "C" : "ABC"[i % 3]}</T>}
            <T x={x + 2} y={393} r mini={mini} color={mini && i % 3 === 1 ? "#c60" : "#000"}>{loads[i]}</T>
            <T x={x} y={406} a="middle" mini={mini}>{k}</T>
          </g>
        );
      })}
      <path d="M168 168H220M245 168H307M326 168H378M401 168H454M480 168H530M190 182H231M255 182H309M335 182H387M410 182H465M490 182H530" />
      {[166, 190, 212, 235, 258, 280, 303, 327, 350, 372, 395, 418].map(x => <path key={x} d={`M${x} 171L${x + 3} 167`} />)}
      <path d="M529 156H537V164H529ZM529 170H537V179H529ZM533 152H540V175H537M525 160H529M525 160V167" />
      <T x={533} y={162} a="middle" mini={mini}>T1</T><T x={533} y={177} a="middle" mini={mini}>T2</T>
      <path d={cloud(341, 187, 382, 412)} /><path d={cloud(384, 119, 523, 412)} /><path d={cloud(749, 188, 775, 413)} />
      <circle cx="784" cy="179" r="1.5" /><path d="M786 179H797V187M793 187H801M795 189H799" />
      <T x={204} y={429} mini={mini}>CẬP NHẬT TRẦN ĐÈN KIẾN TRÚC, SỬ DỤNG APTOMAT DỰ PHÒNG</T>
      <T x={204} y={438} mini={mini}>BỔ SUNG DÂY ĐIỆN CẤP NGUỒN CHIẾU SÁNG</T>
      <T x={204} y={444} mini={mini}>CẬP NHẬT TRẦN ĐÈN KIẾN TRÚC, BỔ SUNG APTOMAT, CONTACTOR</T>
      <T x={204} y={453} mini={mini}>VÀ DÂY ĐIỆN CẤP NGUỒN CHIẾU SÁNG</T>
      <path d="M204 431H358V415M204 446H409V415M631 434H761V415" />
      <T x={477} y={435} s={6} mini={mini}>SƠ ĐỒ TỦ PHÂN PHỐI TẦNG 1 TĐ.1C</T>
      <T x={631} y={432} mini={mini}>CẬP NHẬT HỒ SƠ CTN, SỬ DỤNG APTOMAT DỰ PHÒNG</T>
      <T x={631} y={441} mini={mini}>BỔ SUNG DÂY ĐIỆN CẤP NGUỒN BƠM HỐ PIT</T>
    </svg>
  );
};
const BL = "#6fa9de";
const Cabinet = ({ x, w, mini, flip, band }: { x: number; w: number; mini?: boolean; flip?: boolean; band?: boolean }) => {
  const narrow = w < 60; const d1 = flip ? x + w + 8 : x - 8, d2 = flip ? x + w + 14 : x - 17 + (narrow ? 3 : 0);
  return (
    <g>
      <rect x={x} y="53" width={w} height="213" />
      <path d={`M${d1} 53V283M${d2} 53V283M${Math.min(d2, x)} 53H${Math.max(d2, x + w)}M${Math.min(d1, x)} 266H${Math.max(d1, x + w)}M${Math.min(d2, x)} 283H${Math.max(d2, x)}`} />
      <T x={d1 - 1} y={164} s={5} r mini={mini}>1200</T><T x={d2 - 1} y={175} s={5} r mini={mini}>1400</T><T x={d1 - 1} y={280} s={5} r mini={mini}>100</T>
      {band && <g><rect x={x} y="53" width={w} height="6" fill="#222" /><path d={`M${x + 52} 59L${x + 66} 55H${x + 112}L${x + 106} 56H${x + 68}L${x + 60} 59Z`} fill="#fff" stroke="none" /><circle cx={x + 7} cy="56" r="3.5" fill="#000" /></g>}
      <g stroke={BL} strokeWidth={mini ? 5 : 1.5}><rect x={x} y="266" width={w} height="17" /><rect x={x + (narrow ? 9 : 20)} y="267" width={w - (narrow ? 18 : 40)} height="15" />
        <rect x={x + (narrow ? 5 : 14)} y="270" width={narrow ? 4 : 6} height="10" /><rect x={x + w - (narrow ? 9 : 20)} y="270" width={narrow ? 4 : 6} height="10" /></g>
      <path d={`M${x} 284V296M${x + w} 284V296M${x} 294H${x + w}`} /><T x={x + w / 2} y={293} s={5} a="middle" mini={mini}>{narrow ? "230" : "800"}</T>
      {narrow && <g><path d={`M${x + 8} 274V288M${x + w - 8} 274V288M${x + 8} 287H${x + w - 8}M${x} 296V302M${x + w} 296V302M${x} 301H${x + w}`} /><T x={x + w / 2} y={287} s={5} a="middle" mini={mini}>160</T><T x={x + w / 2} y={300} s={5} a="middle" mini={mini}>250</T></g>}
    </g>
  );
};
const Flat = ({ x, h, mini }: { x: number; h: number; mini?: boolean }) => (
  <g><rect x={x} y="333" width="132" height={h} /><path d={`M${x} 327H${x + 132}M${x} 325V333M${x + 132} 325V333M${x - 8} 333V${333 + h}M${x - 10} 333H${x}M${x - 10} ${333 + h}H${x}`} /><T x={x + 66} y={326} s={5} a="middle" mini={mini}>800</T><T x={x - 9} y={358} s={5} r mini={mini}>250</T></g>
);
const CabinetViews = ({ mini }: { mini?: boolean }) => {
  const rng = (n: number) => Array.from({ length: n }, (_, i) => i);
  const lamp = (x: number, y: number, n: number) => <g key={x + "-" + y} fill="#000" stroke="none"><rect x={x} y={y} width={n * 10 - 2} height="4" />{rng(n).map(i => <g key={i}><ellipse cx={x + 4 + i * 10} cy={y + 8} rx="3" ry="3" /><rect x={x + 1 + i * 10} y={y + 12} width="6" height="1.5" /></g>)}</g>;
  const vent = (x: number, y: number) => <g key={x + "v" + y}><rect x={x} y={y} width="15" height="30" fill="#fff" />{rng(6).map(i => <path key={i} d={`M${x + 2} ${y + 3 + i * 5}H${x + 13}`} strokeWidth="3" stroke="#111" />)}</g>;
  const titles: [string, number][] = [["FRONT - VIEW", 110], ["OPEN 1ST DOOR", 284], ["ARRANGEMENT - VIEW", 485], ["SIDE VIEW", 637], ["BACK - VIEW", 775], ["LEFT VIEW", 891], ["RIGHT VIEW", 950]];
  return (
    <svg viewBox="-21 -111 1042 732" preserveAspectRatio={mini ? "none" : undefined} fill="none" stroke="#000" strokeWidth={mini ? 6 : 1.3} aria-label="Cabinet views" role="img">
      {titles.map(([t, x]) => <T key={t} x={x} y={30} s={6} a="middle" serif mini={mini}>{t}</T>)}
      <Cabinet x={46} w={132} mini={mini} band /><Cabinet x={218} w={132} mini={mini} band /><Cabinet x={422} w={131} mini={mini} band />
      <Cabinet x={618} w={41} mini={mini} /><Cabinet x={710} w={132} mini={mini} /><Cabinet x={872} w={41} mini={mini} /><Cabinet x={929} w={41} mini={mini} flip />
      <path d="M46 60H178M184 53V266M175 73H179V86H175ZM175 153H179V166H175ZM175 233H179V246H175ZM178 80H186M178 160H186M178 240H186" />
      {[70, 123, 204, 257].map(y => <T key={y} x={183} y={y} s={5} r mini={mini}>250</T>)}
      <path d="M53 130V190" strokeWidth="1" /><path d="M53 143V178" strokeWidth="4" /><circle cx="53" cy="135" r="2" fill="#000" /><circle cx="53" cy="184" r="2" fill="#000" />
      <rect x="91" y="61" width="41" height="7" /><path d="M97 65H126M104 63H118" />
      {lamp(98, 72, 3)}{[90, 107, 140].map(y => <g key={y}>{lamp(94, y, 2)}{lamp(114, y, 2)}</g>)}
      {[124, 158].map(y => <path key={y} d={`M106 ${y}H117V${y + 4}H114L112 ${y + 12}L109 ${y + 4}H106Z`} fill="#000" />)}
      <path d="M92 208H102L105 217H118L121 208H133V249H120Q112 245 104 249H92ZM91 202H132M91 200V208M132 200V208M139 208V249M134 208H141M134 249H141" />
      <T x={112} y={236} s={5} a="middle" mini={mini}>DRAWING CASE</T><T x={112} y={201} s={5} a="middle" mini={mini}>250</T><T x={139} y={233} s={5} r mini={mini}>230</T>
      <rect x="225" y="63" width="118" height="194" strokeWidth={mini ? 6 : 3} /><rect x="228" y="67" width="112" height="186" /><path d="M218 61H350M223 266V61M345 61V266M347 73H350V86H347ZM347 153H350V166H347ZM347 233H350V246H347Z" />
      <circle cx="230" cy="84" r="3" fill="#000" /><circle cx="230" cy="236" r="3" fill="#000" /><path d="M340 88V95M340 226V233" strokeWidth="4" />
      <path d="M278 82H288M275 102H292" strokeWidth="3" /><rect x="281" y="90" width="5" height="9" fill="#000" />
      {[259, 271, 288, 300].map(x => <g key={x}><path d={`M${x + 4} 123V159M${x + 4} 161V171`} strokeWidth="8" /><path d={`M${x + 4} 124V171`} stroke="#aaa" strokeWidth="2" strokeDasharray="1 3" /></g>)}
      {rng(12).map(i => <path key={i} d={`M242 ${125 + i * 3}H257M311 ${125 + i * 3}H327`} stroke="#222" strokeWidth="2" strokeDasharray="4 1 2 1" />)}
      {rng(3).map(i => <path key={i} d={`M237 ${163 + i * 3}H258M309 ${163 + i * 3}H330`} strokeWidth="2" strokeDasharray="5 1 3 1" />)}
      <path d="M428 61H547V257H428ZM432 64V256M543 64V256M435 64V256M540 64V256M428 76H547M435 78H540M435 106H540M435 114H540M435 123H540M435 172H540M435 181H540M435 184H540" />
      <path d="M436 71H540M436 252H540" strokeWidth="5" strokeDasharray="2 1.5" /><path d="M433 64V256M541 64V256" strokeWidth="3" strokeDasharray="1 2" />
      <path d="M442 114V184M532 114V184" strokeWidth="5" strokeDasharray="1.5 1.5" />
      <rect x="449" y="83" width="25" height="20" fill="#111" /><circle cx="456" cy="91" r="3" stroke="#888" /><circle cx="468" cy="91" r="3" stroke="#888" />
      <rect x="477" y="81" width="20" height="25" fill="#222" /><rect x="482" y="86" width="11" height="15" fill="#eee" /><path d="M484 92H491M484 96H491" />
      <path d="M501 86V100M505 86V100M513 79V112M523 79V112M535 79V112" strokeWidth="3" strokeDasharray="2 .6" /><path d="M513 79V112M523 79V112" strokeWidth="1" />
      <rect x="462" y="123" width="12" height="47" fill="#111" /><rect x="503" y="123" width="12" height="47" fill="#111" /><rect x="475" y="115" width="27" height="64" fill="#999" /><path d="M479 106V180M486 106V180M493 106V180M499 115V180" strokeWidth="2" />
      {rng(14).map(i => <path key={i} d={`M462 ${125 + i * 3.3}H515`} stroke={i % 3 ? "#000" : "#577"} strokeWidth=".8" />)}
      <rect x="468" y="116" width="8" height="6" fill="#000" /><rect x="484" y="116" width="8" height="6" fill="#000" /><rect x="468" y="173" width="8" height="6" fill="#000" /><rect x="484" y="173" width="8" height="6" fill="#000" />
      <path d="M435 187H540M435 216H540M435 243H540" strokeWidth="6" stroke="#444" /><path d="M438 184V246M537 184V246" strokeWidth="6" stroke="#444" />
      <rect x="441" y="196" width="86" height="12" fill="#000" /><rect x="441" y="224" width="38" height="7" fill="#000" /><ellipse cx="524" cy="229" rx="8" ry="6" fill="#000" />
      <path d="M442 193H526M442 222H478" strokeWidth="3" strokeDasharray="2 1 4 5" />
      <path d="M550 73H553V86H550ZM550 153H553V166H550ZM550 233H553V246H550Z" strokeWidth="2" />
      <path d="M618 63H623V256H618M644 61H655V258H644M644 61V66M644 252V258M655 60V266M650 61V258" /><rect x="652" y="130" width="6" height="7" /><rect x="652" y="183" width="6" height="7" />
      <path d="M656 266V57L659 60" strokeWidth="2" />
      <path d="M659 143Q662 162 662 179M914 143Q915 162 917 179M928 143Q927 162 925 179" stroke="#2f7fc8" strokeWidth={mini ? 4 : 2} />
      <path d="M714 53V266M837 53V266M720 59V50L722 47L725 50V59ZM827 59V50L829 47L832 50V59Z" />
      <path d="M909 53V266M933 53V266" />
      {[880, 947].map(x => <g key={x}>{vent(x, 64)}{vent(x, 226)}<T x={x + 8} y={62} s={4} a="middle" mini={mini}>Louver</T><T x={x + 8} y={224} s={4} a="middle" mini={mini}>Louver</T></g>)}
      <Flat x={46} h={41} mini={mini} /><Flat x={218} h={38} mini={mini} /><Flat x={422} h={41} mini={mini} />
      <path d="M46 372H178M113 338V341M113 363V366M69 352H155" /><rect x="66" y="338" width="92" height="28" rx="2" /><rect x="69" y="341" width="86" height="22" rx="1" />
      <path d="M222 343V361M345 343V361M237 334V338H330V334M237 371V366H330V371" />
      {[[219, 334], [331, 334], [219, 361], [331, 361]].map(([x, y]) => <g key={x + y * 3}><rect x={x} y={y} width="18" height="9" /><circle cx={x + 5} cy={y + 3} r="1" fill="#000" /><circle cx={x + 12} cy={y + 6} r="1" fill="#000" /></g>)}
      <path d="M422 371H553M427 360V371M427 360H546M549 358V374M413 333V371M426 341V355H422M550 341V355H553M433 338V335H426M543 338V335H550" /><circle cx="433" cy="359" r="3" fill="#000" />
      <T x={110} y={388} s={6} a="middle" serif u mini={mini}>TOP - VIEW</T><T x={282} y={388} s={6} a="middle" serif u mini={mini}>BOTTOM - VIEW</T><T x={485} y={388} s={5} a="middle" serif u mini={mini}>TOP &amp; BOTTOM - VIEW CUT OUT</T>
    </svg>
  );
};

/* ---------- status bar ---------- */
const StatusBar = styled.footer`display: flex; align-items: center; justify-content: space-between; height: 48px; padding: 0 36px 0 1544px; color: #262626; font-size: 24px;`;
const StatusGroup = styled.div`display: flex; align-items: center;`;
const PagePicker = styled.label`
  position: relative; display: block; width: 224px; height: 36px; margin: 0 13px 0 2px;
  select { appearance: none; width: 100%; height: 100%; border: 1px solid ${C.line}; border-radius: 0; background: #fff; padding: 0 30px 2px 8px; font-size: 24px; color: #000; }
  svg { position: absolute; right: 7px; top: 15px; }
`;
const Slider = styled.input`
  appearance: none; margin: 0 9px; width: 188px; height: 24px;
  background: linear-gradient(#333, #333) 94px 7px / 1px 8px no-repeat, linear-gradient(#333, #333) 0 11px / 100% 1px no-repeat;
  &::-webkit-slider-thumb { appearance: none; width: 10px; height: 20px; background: #262626; border-radius: 0; }
`;
const Zoom = styled.output`width: 120px; margin-left: 36px;`;
const ZoomOut = styled(IconButton)`margin-left: 8px;`;

/* ---------- taskbar ---------- */
const Taskbar = styled.footer`
  display: flex; align-items: center; height: 96px; border-top: 3px solid #3e4a5c; padding: 0 31px 3px 0; color: #fff;
  background: linear-gradient(90deg, #1f2b35 0, #1f2c37 18%, #13274a 20%, #12264f 30%, #11225a 42%, #10244f 56%, #142048 68%, #162444 72%, #1c2a39 78%, #1b2936 100%);
`;
const Weather = styled.button`display: flex; align-items: center; gap: 14px; width: 838px; padding-left: 38px; text-align: left; line-height: 32px; color: #fff; span { color: #cfd4d8; }`;
const TaskSearch = styled.label`
  display: flex; align-items: center; gap: 22px; width: 438px; height: 64px; margin: 0 5px 0 26px; padding: 0 6px 0 23px; border-radius: 32px; background: rgba(255,255,255,.13);
  input { font-size: 24px; } input::placeholder { color: #cdd3de; }
`;
const AppButton = styled.button<{ $on?: boolean; $run?: boolean }>`
  position: relative; width: 80px; height: 80px; margin: 0 4px; border-radius: 8px; display: flex; align-items: center; justify-content: center; flex: none;
  background: ${p => (p.$on ? "rgba(255,255,255,.08)" : "transparent")};
  &::after { content: ""; position: absolute; bottom: 2px; left: 50%; transform: translateX(-50%); height: 6px; border-radius: 3px; width: ${p => (p.$on ? 32 : 12)}px; background: ${p => (p.$on ? "#4cc2ff" : p.$run ? "#9aa1b5" : "transparent")}; }
`;
const Tray = styled.div`display: flex; align-items: center; justify-content: flex-end; flex: 1; gap: 31px;`;
const NetSound = styled.button`display: flex; gap: 17px;`;
const Clock = styled.time`text-align: right; line-height: 32px;`;
const A = ({ children }: { children: React.ReactNode }) => <svg width="48" height="48" viewBox="0 0 48 48" fill="none" aria-hidden="true">{children}</svg>;
const sans = "Open Sans, sans-serif";
type AppDef = [string, React.ReactNode, boolean?];
const apps: AppDef[] = [
  ["Task View", <A><rect x="0" y="12" width="36" height="32" fill="#666" /><rect x="12" y="0" width="36" height="32" fill="#f3f3f3" /><rect x="12" y="12" width="24" height="20" fill="#b9b9b9" /></A>],
  ["Chat", <A><path d="M24 1C37 1 46 11 46 24S37 46 24 46C19 46 16 45 13 43L2 46L5 35C-4 19 6 1 24 1Z" fill="#6d6fd6" /><path d="M24 1C11 1 2 11 2 24C2 28 3 32 5 35L30 2Z" fill="#8d74c4" /><rect x="11" y="14" width="18" height="19" rx="4" fill="#fff" /><path d="M31 21L39 15V32L31 27Z" fill="#fff" /></A>],
  ["Chrome", <A><circle cx="24" cy="24" r="24" fill="#e33b2e" /><path d="M3 12A24 24 0 0 0 24 48L35 30L24 24L13 30Z" fill="#279847" /><path d="M24 48A24 24 0 0 0 45 12H24L34 30Z" fill="#fdc41c" /><circle cx="24" cy="24" r="12" fill="#fff" /><circle cx="24" cy="24" r="9.5" fill="#2b7de9" /></A>, true],
  ["Registry Editor", <A><path d="M6 16L22 10L38 16V37L22 43L6 37Z" fill="#2aa9df" /><path d="M22 21V43L38 37V16Z" fill="#0e6c9e" /><path d="M6 16L22 21V43M22 21L38 16M6 23L22 28L38 23M6 30L22 36L38 30M11 18V39M17 20V41M28 19V41M33 18V39" stroke="#9ce3ff" /><path d="M24 4L30 0L36 5L33 11L25 10Z" fill="#43c4f2" /><path d="M35 13L42 11L46 17L42 22L35 20Z" fill="#1785bb" /></A>, true],
  ["Resource Monitor", <A><rect x="1" y="7" width="46" height="34" rx="1" fill="#eef1f4" stroke="#a6adb5" strokeWidth="2" /><path d="M3 39V29H8L10 27L13 13L18 24L20 26L24 28L27 35L31 33L34 15L37 27L45 31V39Z" fill="#8fd0f5" stroke="#2c91d3" /></A>],
  ["File Explorer", <A><path d="M0 4H15L21 9H46V20H0Z" fill="#dc9d0b" /><path d="M0 11H16L20 8H48V46H0Z" fill="#fccb3d" /><path d="M8 46V37Q8 32 13 32H35Q40 32 40 37V46Z" fill="#0c6fc4" /><path d="M14 39H34" stroke="#0a4d8f" strokeWidth="2" /></A>, true],
  ["Edge", <A><circle cx="24" cy="24" r="24" fill="#1279d3" /><path d="M1 20C4 6 14 0 24 0C38 0 48 10 48 22C48 30 42 34 34 32C27 31 30 27 29 22C27 14 12 12 1 20Z" fill="#3fc9c8" /><path d="M30 1C42 4 48 12 48 22C48 30 42 34 34 32C28 31 30 27 29 22Z" fill="#62dc60" /><path d="M22 20C14 28 20 44 34 43C40 42 43 39 45 35C38 39 25 38 24 28C24 24 26 22 22 20Z" fill="#0d4f98" /></A>],
  ["Calculator", <A><rect x="6" y="0" width="36" height="48" rx="2" fill="#6f7982" /><rect x="10" y="4" width="28" height="8" fill="#43d6f8" />{[0, 1, 2].map(r => [0, 1, 2].map(c => <rect key={r + "" + c} x={10 + c * 10} y={16 + r * 10} width="8" height="8" rx="1" fill={c === 2 && r ? "#114a8b" : "#d2d8de"} />))}<rect x="30" y="26" width="8" height="18" fill="#114a8b" /></A>],
  ["Remote", <A><circle cx="24" cy="24" r="24" fill="#2a7ccb" /><rect x="12" y="13" width="24" height="18" rx="2" fill="#2a7ccb" stroke="#fff" strokeWidth="2.5" /><path d="M15 28V16H32Z" fill="#fff" /><path d="M21 31H27V34H32V36H16V34H21Z" fill="#fff" /></A>],
  ["Zalo", <A><path d="M14 0H34Q48 0 48 14V34Q48 48 34 48H14Q0 48 0 34V14Q0 0 14 0Z" fill="#0a68ff" /><path d="M16 0H34Q48 0 48 14V32Q48 43 34 43H16Q11 43 8 42L4 41Q8 39 8 36C3 28 3 10 16 0Z" fill="#fff" /><text x="27" y="28" fontSize="16" fontWeight="700" fill="#0a68ff" textAnchor="middle" fontFamily={sans}>Zalo</text></A>],
  ["Visual Studio", <A><path d="M0 13L5 10L35 36V48L0 15Z" fill="#8f57d6" /><path d="M0 12L5 10V37L0 34Z" fill="#6f36b4" /><path d="M5 38L36 12V0L0 34Z" fill="#7a42c5" /><path d="M36 0L48 5V43L36 48Z" fill="#b57af2" /></A>],
  ["AutoCAD", <A><rect width="48" height="48" fill="#f9e9e2" /><path d="M8 41L20 5H29L41 41H33L25 12L16 41Z" fill="#c1272d" /><path d="M14 32C20 26 29 26 35 32V27C29 22 21 22 16 26Z" fill="#8f1a1f" /></A>, true],
  ["Notepad++", <A><path d="M3 5H32L38 44L3 46Z" fill="#f4f7ef" stroke="#777" /><path d="M4 22L35 20L38 43L4 45Z" fill="#7cd32c" /><path d="M4 5H32" stroke="#333" strokeWidth="3" strokeDasharray="2 3" /><path d="M8 30C8 18 20 16 26 20C24 30 14 26 12 32M24 33V38M22 36H30" stroke="#24501b" strokeWidth="3" /><circle cx="22" cy="18" r="4" fill="#fff" stroke="#333" /><path d="M46 3L36 30L33 34V28L43 2Z" fill="#f0a020" /></A>],
  ["Recorder", <A><rect x="1" y="3" width="46" height="32" rx="3" fill="#7a2a6b" stroke="#e8e8e8" strokeWidth="2" /><path d="M20 36H28V42H36V45H12V42H20Z" fill="#eee" /><circle cx="8" cy="11" r="5" fill="#f33b32" /><circle cx="20" cy="12" r="4" fill="#fff" /><circle cx="28" cy="12" r="4" fill="#fff" /><path d="M15 17H31V26H15ZM32 21L37 17V26L32 23Z" fill="#fff" /></A>, true],
  ["Excel", <A><rect x="24" y="7" width="21" height="33" fill="#fff" stroke="#1e6e42" strokeWidth="2" /><path d="M27 12H43M27 18H43M27 24H43M27 30H43M27 36H43" stroke="#1e6e42" strokeWidth="2" /><path d="M35 8V39" stroke="#1e6e42" /><path d="M3 8L28 3V45L3 40Z" fill="#1e7145" /><text x="15" y="32" fontSize="21" fontWeight="700" fill="#fff" textAnchor="middle" fontFamily={sans}>X</text></A>],
  ["Word", <A><rect x="24" y="7" width="21" height="33" fill="#fff" stroke="#2b579a" strokeWidth="2" /><path d="M27 12H43M27 17H43M27 22H43M27 27H43M27 32H43M27 36H43" stroke="#2b579a" strokeWidth="2" /><path d="M3 8L28 3V45L3 40Z" fill="#2b579a" /><text x="15" y="31" fontSize="18" fontWeight="700" fill="#fff" textAnchor="middle" fontFamily={sans}>W</text></A>],
  ["AutoCAD Beta", <A><path d="M4 8L10 5V36L4 38Z" fill="#f26a8d" /><path d="M8 5H43V37H8Z" fill="#e5174f" /><path d="M8 36H43V48H8Z" fill="#8b0c2d" /><text x="25" y="29" fontSize="22" fontWeight="700" fill="#fff" textAnchor="middle" fontFamily={sans}>A</text><text x="26" y="46" fontSize="9" fontWeight="700" fill="#fff" textAnchor="middle" fontFamily={sans}>CAD</text><rect x="29" y="0" width="19" height="10" rx="5" fill="#1591e6" /><text x="38" y="7" fontSize="6" fontWeight="700" fill="#fff" textAnchor="middle" fontFamily={sans}>Beta</text></A>],
  ["AutoCAD LT", <A><rect x="1" y="1" width="46" height="46" fill="#1fa193" stroke="#fff" strokeWidth="2" /><path d="M3 34L13 6H20L24 34H17L16 28H9L8 34Z" fill="#e7f7f4" stroke="#0e5f57" /><path d="M3 46L8 38H20L28 46Z" fill="#bfe8e2" /><path d="M34 2V46M2 32H46" stroke="#fff" strokeWidth="2" /><rect x="30" y="28" width="8" height="8" fill="#1fa193" stroke="#fff" strokeWidth="2" /></A>],
];

const App = () => (
  <Shell>
    <Global />
    <TitleBar>
      <QuickBar>
        <FoxitLogo />
        {quick.map(([n, icon]) => <IconButton key={n} aria-label={n}>{icon}</IconButton>)}
        <CaretPair>
          <IconButton $w={16} aria-label="Touch mode options"><Caret /></IconButton>
          <IconButton $w={24} aria-label="Customize toolbar"><svg width="11" height="13" aria-hidden="true"><path d="M0 1H11" stroke="#222" strokeWidth="2" /><path d="M0 5H11L5.5 13Z" fill="#222" /></svg></IconButton>
        </CaretPair>
      </QuickBar>
      <Title>Plot By Polyline's Layer.PDF - Foxit PhantomPDF</Title>
      <WindowButtons>
        <IconButton aria-label="Full screen"><Ic><path d="M4 2H13V6L9 10L8 11H4ZM19 2H28V11H24L19 6ZM4 18H8L13 23V26H4ZM24 18H28V26H19V22Z" stroke="#50505f" /></Ic></IconButton>
        <IconButton aria-label="Minimize"><Ic><rect x="5" y="12" width="22" height="8" stroke="#50505f" /></Ic></IconButton>
        <IconButton aria-label="Restore"><Ic><path d="M5 12H20V27H5ZM10 17H15V22H10ZM11 9V5H27V19H23M15 9H23V14" stroke="#50505f" /></Ic></IconButton>
        <IconButton aria-label="Close"><Ic><path d="M6 7H12L16 11L20 7H26V11L21 16L26 21V25H20L16 21L12 25H6V21L11 16L6 11Z" stroke="#50505f" /></Ic></IconButton>
      </WindowButtons>
    </TitleBar>
    <MenuBar>
      <MenuTab $w={126} $kind="file">File</MenuTab>
      {([["Home", 120], ["Convert", 140], ["Edit", 95], ["Fill & Sign", 160], ["Organize", 151], ["Comment", 159], ["View", 113], ["Form", 110], ["Protect", 133], ["Share", 117], ["Connect", 143], ["Accessibility", 180], ["Help", 105]] as [string, number][]).map(([t, w]) =>
        <MenuTab key={t} $w={w} $kind={t === "View" ? "on" : undefined}>{t}</MenuTab>)}
      <Tell>
        <Ic><path d="M11 25V21C5 15 5 3 16 2C27 3 27 15 21 21V25ZM11 28H21M13 31H19" stroke="#999" strokeWidth="1.6" fill="#f6f6f6" /></Ic>
        <PlainInput placeholder="Tell me what you want to do..." aria-label="Tell me what you want to do" />
      </Tell>
      <MenuRight>
        <IconButton aria-label="Search folder"><Ic><path d="M1 3H12L14 6H26V10H6L1 24Z" fill={C.orange} /><path d="M1 27V10H30L28 27Z" fill="#eec687" /><circle cx="20" cy="20" r="6" fill="#fff" stroke="#999" /><path d="M24 25L30 31" stroke="#888" strokeWidth="3" /></Ic></IconButton>
        <Caret />
        <FindBox><PlainInput placeholder="Find" aria-label="Find" /><Ic><circle cx="20" cy="11" r="9" stroke="#3aa5cc" strokeWidth="4" /><path d="M13 19L3 30" stroke="#3c5fa0" strokeWidth="5" /></Ic></FindBox>
        <IconButton aria-label="Settings"><Ic><path d="M13 4H19V8L23 6L27 10L24 13H28V19H24L27 23L23 27L19 24V28H13V24L9 27L5 23L8 19H4V13H8L5 10L9 6L13 8Z" fill="#fff" stroke="#666a78" strokeWidth="1.6" /><circle cx="16" cy="16" r="3" stroke="#666a78" /></Ic></IconButton>
        <Caret />
        <IconButton $w={40} aria-label="Previous result"><Ic w={16} h={28} box="0 0 16 28"><path d="M15 1V27L1 14Z" stroke="#bbb" /></Ic></IconButton>
        <IconButton $w={26} aria-label="Next result"><Ic w={16} h={28} box="0 0 16 28"><path d="M1 1V27L15 14Z" stroke="#bbb" /></Ic></IconButton>
        <IconButton $w={36} aria-label="Notifications"><Ic><path d="M6 25V13C6 0 26 0 26 13V25H30V26H2V25Z" fill="#b5d6f5" stroke="#3f82c0" /><path d="M12 28H20L16 32Z" fill="#3f82c0" /></Ic></IconButton>
        <Caret />
        <IconButton aria-label="Account"><Ic><path d="M0 0H32V32H0Z" fill="#3c3c3c" /><path d="M3 32C3 24 10 25 13 22C7 14 9 4 16 4S25 14 19 22C22 25 30 24 30 32Z" fill="#fff" /></Ic></IconButton>
        <Caret />
      </MenuRight>
    </MenuBar>

    <Ribbon>
      <Group $w={155}>
        <Seg><Col $pad={8}>
          <Row $on><HandIcon />Hand</Row><Row><SelectIcon />Select <Caret /></Row><Row><ZoomIcon />Zoom <Caret /></Row>
        </Col></Seg><GroupLabel>Tools</GroupLabel>
      </Group>
      <Group $w={284}>
        <Seg><Col $pad={10}>
          <PageNav>
            <IconButton $w={37} aria-label="First page"><ArrowIcon dir="l" dbl color="#bccfe2" /></IconButton>
            <IconButton $w={30} aria-label="Previous page"><ArrowIcon dir="l" color="#bccfe2" /></IconButton>
            <GotoInput defaultValue="[1] Model" aria-label="Page" />
            <IconButton $w={14} aria-label="Next page"><ArrowIcon dir="r" color={C.blue} /></IconButton>
            <IconButton $w={70} aria-label="Last page"><ArrowIcon dir="r" dbl color={C.blue} /></IconButton>
          </PageNav>
          <Row><Windows />Previous View</Row><Row $off><Windows next />Next View</Row>
        </Col></Seg><GroupLabel>Go To</GroupLabel>
      </Group>
      <Group $w={396}>
        <Seg><Col $pad={11} $w={210}><Row><BookIcon />Read Mode</Row><Row><ReverseIcon />Reverse View</Row><Row><TextViewerIcon />Text Viewer</Row></Col>
          <Col><Row><ReflowIcon />Reflow</Row><Row><MoonIcon />Night Mode</Row></Col></Seg><GroupLabel>Document Views</GroupLabel>
      </Group>
      <Group $w={692}>
        <GroupBody>
          <Seg $w={104} $line><Big $w={108}><BigIcon><RotateIcon /></BigIcon><span>Rotate</span><BigLine>View<Caret /></BigLine></Big></Seg>
          <Seg $w={129} $line $pad={16}>
            <Col $w={59}><IconButton aria-label="Single page"><SinglePage /></IconButton><IconButton aria-label="Continuous"><ContPage /></IconButton><SplitButton $w={53} aria-label="Split"><SplitIcon /><Caret /></SplitButton></Col>
            <Col><IconButton $w={48} aria-label="Facing"><FacingPages /></IconButton><IconButton $w={48} $on aria-label="Continuous facing"><ContFacing /></IconButton><IconButton $w={48} aria-label="Cover page"><CoverIcon /></IconButton></Col>
          </Seg>
          <Seg $w={307} $line $pad={17}>
            <Col $w={115}><Check><input type="checkbox" />Rulers</Check><Check><input type="checkbox" />Guides</Check><Check><input type="checkbox" />Grid</Check></Col>
            <Col><Check><input type="checkbox" />Snap to Grid</Check><Check><input type="checkbox" defaultChecked />Line Weights</Check></Col>
          </Seg>
          <Seg><Big $w={151}><BigIcon><TransIcon /></BigIcon><span>Page</span><span>Transitions</span></Big></Seg>
        </GroupBody><GroupLabel>Page Display</GroupLabel>
      </Group>
      <Group $w={472}>
        <GroupBody>
          <Seg $w={136} $line><Big $w={140}><BigIcon><ScrollIcon /></BigIcon><span>AutoScroll</span></Big></Seg>
          <Seg $w={168} $line $pad={10}><Col><Row><MagIcon k="#" />Marquee</Row><Row><MagIcon k="L" />Loupe</Row><Row><MagIcon k="M" />Magnifier</Row></Col></Seg>
          <Seg $w={168}><Big $w={102}><BigIcon><ReadIcon /></BigIcon><span>Read</span><BigLine><Caret /></BigLine></Big>
            <Col>{[0, 1].map(k => <SplitButton key={k} $w={53} aria-label={`Read option ${k + 1}`}><ReadDoc k={k} /><Caret color="#777" /></SplitButton>)}<IconButton aria-label="Pause"><ReadDoc k={2} /></IconButton></Col></Seg>
        </GroupBody><GroupLabel>Assistant</GroupLabel>
      </Group>
      <Group $w={233}>
        <GroupBody><Big $w={146}><BigIcon><NavPanelIcon /></BigIcon><span>Navigation</span><BigLine>Panels<Caret /></BigLine></Big><Big $w={72}><BigIcon><StatusIcon /></BigIcon><span>Status</span><BigLine>Bar<Caret /></BigLine></Big></GroupBody>
        <GroupLabel>View Setting</GroupLabel>
      </Group>
      <Group $w={215}>
        <GroupBody><Big $w={132}><BigIcon><CompareIcon /></BigIcon><span>Compare</span></Big><Big $w={66}><BigIcon><CountIcon /></BigIcon><span>Word</span><span>Count</span></Big></GroupBody>
        <GroupLabel>Review</GroupLabel>
      </Group>
      <CornerSlot><button aria-label="Collapse ribbon"><Ic w={26} h={18} box="0 0 26 18"><path d="M2 16L13 3L24 16" stroke="#aaa" strokeWidth="4" /></Ic></button></CornerSlot>
    </Ribbon>

    <DocTabs>
      <DocTab $w={316}><TabShape w={316} fill="#efefef" /><button>Start</button></DocTab>
      <DocTab $w={383} $on><TabShape w={383} fill="#fdfdfd" /><button>Plot By Polyline's Layer....</button><button aria-label="Close tab"><Ic w={16} h={16} box="0 0 16 16"><path d="M2 1L14 15M14 1L2 15" stroke="#222" strokeWidth="3" /></Ic></button></DocTab>
      <CornerSlot $tabs><button aria-label="Tab list"><svg width="18" height="12" aria-hidden="true"><path d="M0 0H18L9 12Z" fill="#111" /></svg></button></CornerSlot>
    </DocTabs>

    <Work>
      <Rail aria-label="Navigation">{railIcons.map(([n, icon], i) => <RailButton key={n} $on={i === 1} aria-label={n}>{icon}</RailButton>)}</Rail>
      <Panel>
        <PanelHead><PanelTitle>Pages</PanelTitle>
          <button aria-label="Expand"><svg width="17" height="14" aria-hidden="true"><path d="M0 0L9 7L0 14ZM8 0L17 7L8 14Z" fill="#222" /></svg></button>
          <button aria-label="Hide panel"><svg width="12" height="18" aria-hidden="true"><path d="M11 0V18L1 9Z" fill="#222" /></svg></button>
        </PanelHead>
        <PanelTools>{["Zoom in", "Zoom out", "Rotate left", "Rotate right", "Insert", "Delete", "Show bookmarks"].map((n, k) => <IconButton key={n} aria-label={n}><PageTool k={k} /></IconButton>)}</PanelTools>
        <Thumbs>
          <ThumbCell $on><ThumbFrame $on><QuoteMini /></ThumbFrame><figcaption>[1] Model</figcaption></ThumbCell>
          <ThumbCell><ThumbFrame><Schematic mini /></ThumbFrame><figcaption>[2] Model</figcaption></ThumbCell>
          <ThumbCell><ThumbFrame><CabinetViews mini /></ThumbFrame><figcaption>[3] Model</figcaption></ThumbCell>
        </Thumbs>
      </Panel>
      <Canvas>
        <Sheets><Sheet><QuoteTable /></Sheet><Sheet><Schematic /></Sheet><Sheet><CabinetViews /></Sheet></Sheets>
      </Canvas>
    </Work>

    <StatusBar>
      <StatusGroup>
        <button aria-label="First"><svg width="26" height="28" aria-hidden="true"><path d="M14 0V28L0 14ZM25 0V28L19 22V6Z" fill="#a5a5a5" /></svg></button>
        <IconButton $w={48} aria-label="Previous"><svg width="14" height="28" aria-hidden="true"><path d="M14 0V28L0 14Z" fill="#a5a5a5" /></svg></IconButton>
        <PagePicker><select aria-label="Current page"><option>[1] Model (1 / 3)</option></select><Caret /></PagePicker>
        <button aria-label="Next"><svg width="14" height="28" aria-hidden="true"><path d="M0 0V28L14 14Z" fill="#222" /></svg></button>
        <IconButton $w={70} aria-label="Last"><svg width="25" height="28" aria-hidden="true"><path d="M0 0V28L5 22V6ZM11 0V28L25 14Z" fill="#222" /></svg></IconButton>
        <IconButton $w={16} aria-label="Previous view"><Windows /></IconButton><IconButton $w={68} aria-label="Next view"><Windows next /></IconButton>
      </StatusGroup>
      <StatusGroup>
        <IconButton $w={40} aria-label="Single page"><SinglePage /></IconButton><IconButton $w={42} aria-label="Continuous"><ContPage /></IconButton><IconButton $w={42} aria-label="Facing"><FacingPages /></IconButton><IconButton $w={40} $on aria-label="Continuous facing"><ContFacing /></IconButton>
        <Zoom>33.33%</Zoom><Caret />
        <ZoomOut aria-label="Zoom out"><Ic><circle cx="16" cy="16" r="14.5" stroke="#444" strokeWidth="1.5" /><path d="M9 16H23" stroke="#444" /></Ic></ZoomOut>
        <Slider type="range" defaultValue="14" aria-label="Zoom" />
        <IconButton aria-label="Zoom in"><Ic><circle cx="16" cy="16" r="14.5" stroke="#444" strokeWidth="1.5" /><path d="M9 16H23M16 9V23" stroke="#444" /></Ic></IconButton>
      </StatusGroup>
    </StatusBar>

    <Taskbar>
      <Weather>
        <svg width="49" height="42" viewBox="0 0 49 42" aria-hidden="true"><circle cx="33" cy="13" r="13" fill="#f29a1f" /><circle cx="23" cy="21" r="12" fill="#a9c4f3" /><circle cx="36" cy="28" r="11" fill="#8fb2ee" /><rect x="0" y="21" width="47" height="20" rx="10" fill="#b9d0f8" /></svg>
        <div>29°C<br /><span>Nhiều mây</span></div>
      </Weather>
      <button aria-label="Start"><svg width="46" height="46" viewBox="0 0 46 46" aria-hidden="true"><path d="M0 0H22V22H0Z" fill="#6be3fb" /><path d="M24 0H46V22H24Z" fill="#4cc9fb" /><path d="M0 24H22V46H0Z" fill="#36b8fb" /><path d="M24 24H46V46H24Z" fill="#189ffb" /></svg></button>
      <TaskSearch>
        <Ic><circle cx="14" cy="13" r="11" stroke="#eef" strokeWidth="3" fill="#4f5e80" /><path d="M22 21L29 29" stroke="#eef" strokeWidth="4" /></Ic>
        <PlainInput placeholder="Search" aria-label="Search" />
        <svg width="96" height="50" viewBox="0 0 96 50" fill="none" aria-hidden="true"><path d="M16 6C14 24 28 34 50 46M42 2C62 14 40 28 60 45M2 22C14 34 30 40 56 46M14 46C24 40 40 46 58 46" stroke="#86a832" strokeWidth="4" /><path d="M12 2L24 22L16 26ZM0 14L22 24L14 30ZM2 24L24 28L12 34ZM38 4L34 26L26 20ZM28 6L32 26L22 22ZM12 32L26 38L12 46ZM8 30L24 36L12 40Z" fill="#e3e3ec" /><path d="M58 46C60 36 70 26 84 24C90 30 84 44 74 46Z" fill="#e3bd4b" /><path d="M80 25C90 18 76 14 88 6M84 25C96 20 96 24 92 14" stroke="#c78a2c" strokeWidth="2" /></svg>
      </TaskSearch>
      {apps.map(([n, icon, run]) => <AppButton key={n} $run={run} aria-label={n}>{icon}</AppButton>)}
      <AppButton $on aria-label="Foxit PhantomPDF"><FoxitLogo size={48} /></AppButton>
      <Tray>
        <IconButton aria-label="Show hidden icons"><svg width="22" height="14" fill="none" aria-hidden="true"><path d="M1 13L11 2L21 13" stroke="#fff" strokeWidth="2" /></svg></IconButton>
        <IconButton aria-label="Spotify"><Ic><circle cx="16" cy="16" r="15.5" fill="#1ed760" /><path d="M7 11C13 9 21 10 26 13M8 17C13 15 19 16 24 18M9 22C13 21 18 21 22 23" stroke="#10212b" strokeWidth="3" /></Ic></IconButton>
        <IconButton aria-label="Eject USB"><Ic><path d="M5 9H21V24M17 31H7Q5 31 5 28V9M8 9V1H19V9M18 27L22 31L29 23" stroke="#fff" /><path d="M11 5H13M15 5H17" stroke="#fff" /></Ic></IconButton>
        <IconButton aria-label="Input method"><Ic><rect x="1" y="1" width="30" height="30" fill="#c6d2f5" stroke="#4f8de0" /><path d="M24 7H15C10 7 8 11 8 16S10 25 15 25H24M9 16H22" stroke="#5c6cae" strokeWidth="3" /></Ic></IconButton>
        <NetSound aria-label="Network and sound">
          <Ic><path d="M1 12C9 3 23 3 31 12" stroke="#596672" strokeWidth="3" /><path d="M5 16C11 9 21 9 27 16M10 20C13 16 19 16 22 20" stroke="#fff" strokeWidth="2.5" /><circle cx="16" cy="25" r="3" fill="#fff" /></Ic>
          <Ic><path d="M1 12H7L14 5V27L7 20H1Z" stroke="#fff" /><path d="M18 11Q21 16 18 21" stroke="#fff" /><path d="M22 8Q27 16 22 24M27 4Q34 16 27 28" stroke="#596672" /></Ic>
        </NetSound>
        <Clock>1:19 PM<br />3/24/2023</Clock>
      </Tray>
    </Taskbar>
  </Shell>
);
export default App;
